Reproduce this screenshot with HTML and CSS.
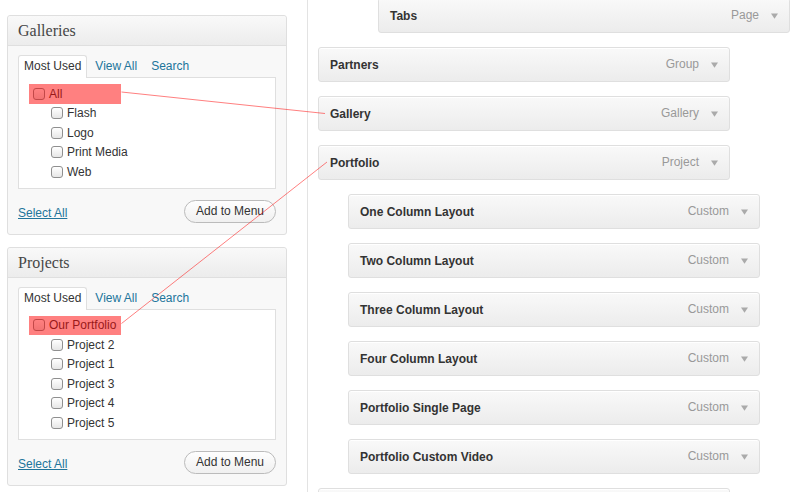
FILE: index.html
```html
<!DOCTYPE html>
<html lang="en">
<head>
<meta charset="utf-8">
<title>Menus</title>
<link rel="stylesheet" href="styles.css">
</head>
<body>
<div class="page">
  <aside class="sidebar">
    <section class="box">
      <h3 class="box-title">Galleries</h3>
      <div class="box-body">
        <ul class="tabs">
          <li class="tab active">Most Used</li>
          <li class="tab"><a href="#">View All</a></li>
          <li class="tab"><a href="#">Search</a></li>
        </ul>
        <div class="list">
          <div class="row mark"><span class="cb"></span>All</div>
          <div class="row child"><span class="cb"></span>Flash</div>
          <div class="row child"><span class="cb"></span>Logo</div>
          <div class="row child"><span class="cb"></span>Print Media</div>
          <div class="row child"><span class="cb"></span>Web</div>
        </div>
        <div class="actions">
          <a href="#" class="select-all">Select All</a>
          <button class="btn">Add to Menu</button>
        </div>
      </div>
    </section>
    <section class="box">
      <h3 class="box-title">Projects</h3>
      <div class="box-body">
        <ul class="tabs">
          <li class="tab active">Most Used</li>
          <li class="tab"><a href="#">View All</a></li>
          <li class="tab"><a href="#">Search</a></li>
        </ul>
        <div class="list">
          <div class="row mark"><span class="cb"></span>Our Portfolio</div>
          <div class="row child"><span class="cb"></span>Project 2</div>
          <div class="row child"><span class="cb"></span>Project 1</div>
          <div class="row child"><span class="cb"></span>Project 3</div>
          <div class="row child"><span class="cb"></span>Project 4</div>
          <div class="row child"><span class="cb"></span>Project 5</div>
        </div>
        <div class="actions">
          <a href="#" class="select-all">Select All</a>
          <button class="btn">Add to Menu</button>
        </div>
      </div>
    </section>
  </aside>

  <main class="menu">
    <div class="item depth-2"><span class="name">Tabs</span><span class="type">Page</span><svg class="arrow" viewBox="0 0 8 6"><path d="M0 0H8L4 6Z"/></svg></div>
    <div class="item"><span class="name">Partners</span><span class="type">Group</span><svg class="arrow" viewBox="0 0 8 6"><path d="M0 0H8L4 6Z"/></svg></div>
    <div class="item"><span class="name">Gallery</span><span class="type">Gallery</span><svg class="arrow" viewBox="0 0 8 6"><path d="M0 0H8L4 6Z"/></svg></div>
    <div class="item"><span class="name">Portfolio</span><span class="type">Project</span><svg class="arrow" viewBox="0 0 8 6"><path d="M0 0H8L4 6Z"/></svg></div>
    <div class="item depth-1"><span class="name">One Column Layout</span><span class="type">Custom</span><svg class="arrow" viewBox="0 0 8 6"><path d="M0 0H8L4 6Z"/></svg></div>
    <div class="item depth-1"><span class="name">Two Column Layout</span><span class="type">Custom</span><svg class="arrow" viewBox="0 0 8 6"><path d="M0 0H8L4 6Z"/></svg></div>
    <div class="item depth-1"><span class="name">Three Column Layout</span><span class="type">Custom</span><svg class="arrow" viewBox="0 0 8 6"><path d="M0 0H8L4 6Z"/></svg></div>
    <div class="item depth-1"><span class="name">Four Column Layout</span><span class="type">Custom</span><svg class="arrow" viewBox="0 0 8 6"><path d="M0 0H8L4 6Z"/></svg></div>
    <div class="item depth-1"><span class="name">Portfolio Single Page</span><span class="type">Custom</span><svg class="arrow" viewBox="0 0 8 6"><path d="M0 0H8L4 6Z"/></svg></div>
    <div class="item depth-1"><span class="name">Portfolio Custom Video</span><span class="type">Custom</span><svg class="arrow" viewBox="0 0 8 6"><path d="M0 0H8L4 6Z"/></svg></div>
    <div class="item"></div>
  </main>

  <svg class="links" width="804" height="492" viewBox="0 0 804 492">
    <line x1="121.5" y1="92" x2="325" y2="113.5"/>
    <line x1="121.5" y1="323.5" x2="327" y2="162"/>
  </svg>
</div>
</body>
</html>
```

FILE: styles.css
```css
* { box-sizing: border-box; }

html, body {
  margin: 0;
  padding: 0;
  background: #fff;
  height: 492px;
  overflow: hidden;
}

body {
  font-family: "Liberation Sans", Arial, sans-serif;
  font-size: 12px;
  color: #333;
}

.page {
  position: relative;
  display: flex;
  align-items: flex-start;
  height: 492px;
  overflow: hidden;
}

/* ---------- sidebar ---------- */
.sidebar {
  width: 308px;
  flex: none;
  align-self: stretch;
  padding: 15px 20px 0 7px;
  border-right: 1px solid #e3e3e3;
  display: flex;
  flex-direction: column;
  gap: 12px;
}

.box {
  border: 1px solid #dfdfdf;
  border-radius: 3px;
  background: #f8f8f8;
}

.box-title {
  margin: 0;
  height: 30px;
  line-height: 29px;
  padding: 0 10px;
  border-bottom: 1px solid #dfdfdf;
  background: linear-gradient(#f9f9f9, #ececec);
  font-family: "Liberation Serif", Georgia, serif;
  font-weight: normal;
  font-size: 16px;
  color: #464646;
  border-radius: 3px 3px 0 0;
}

.box-body {
  padding: 0 10px;
}

.tabs {
  list-style: none;
  margin: 9px 0 0;
  padding: 0;
  display: flex;
  gap: 2px;
  position: relative;
  z-index: 1;
  margin-bottom: -1px;
}

.tab {
  height: 23px;
  line-height: 21px;
  padding: 0 5px;
  border: 1px solid transparent;
  border-bottom: 0;
  border-radius: 3px 3px 0 0;
}

.tab a {
  color: #21759b;
  text-decoration: none;
}

.tab.active {
  background: #fff;
  border-color: #dfdfdf;
  color: #333;
}

.list {
  background: #fff;
  border: 1px solid #dfdfdf;
  padding: 6px 0;
}

.row {
  height: 19.5px;
  display: flex;
  align-items: center;
  gap: 4px;
  color: #333;
}

.row.child {
  padding-left: 32px;
}

.row.mark {
  margin-left: 10px;
  width: 92px;
  padding-left: 4px;
  background: #ff8080;
  color: #991919;
}

.cb {
  width: 12px;
  height: 12px;
  border: 1px solid #8f8f8f;
  border-radius: 3px;
  background: linear-gradient(#fff, #e6e6e6);
  flex: none;
}

.row.mark .cb {
  border-color: #c24848;
  background: linear-gradient(#ff8080, #f27373);
}

.actions {
  display: flex;
  justify-content: space-between;
  align-items: center;
  padding: 11px 0 11px;
}

.select-all {
  color: #21759b;
  text-decoration: underline;
  font-size: 12px;
  padding-top: 3px;
}

.btn {
  height: 23px;
  width: 92px;
  padding: 0;
  border: 1px solid #bbb;
  border-radius: 12px;
  background: linear-gradient(#fefefe, #f0f0f0);
  font-family: "Liberation Sans", Arial, sans-serif;
  font-size: 12px;
  color: #333;
  line-height: 21px;
}

/* ---------- menu ---------- */
.menu {
  flex: none;
  margin-top: -2px;
  padding-left: 10px;
  display: flex;
  flex-direction: column;
  gap: 14px;
}

.item {
  width: 412px;
  height: 35px;
  flex: none;
  display: flex;
  align-items: center;
  padding: 0 11px;
  border: 1px solid #dfdfdf;
  border-radius: 3px;
  background: linear-gradient(#f9f9f9, #ececec);
  box-shadow: inset 0 1px 0 #fff;
}

.item.depth-1 { margin-left: 30px; }
.item.depth-2 { margin-left: 60px; }

.name {
  font-weight: bold;
  font-size: 12px;
  color: #333;
  flex: 1;
}

.type {
  color: #999;
  font-size: 12px;
  margin-top: -2px;
}

.arrow {
  width: 7px;
  height: 6px;
  margin-left: 12px;
  fill: #aaa;
}

/* ---------- connector lines ---------- */
.links {
  position: absolute;
  left: 0;
  top: 0;
  pointer-events: none;
}

.links line {
  stroke: rgba(255, 0, 0, 0.5);
  stroke-width: 1;
}
```
